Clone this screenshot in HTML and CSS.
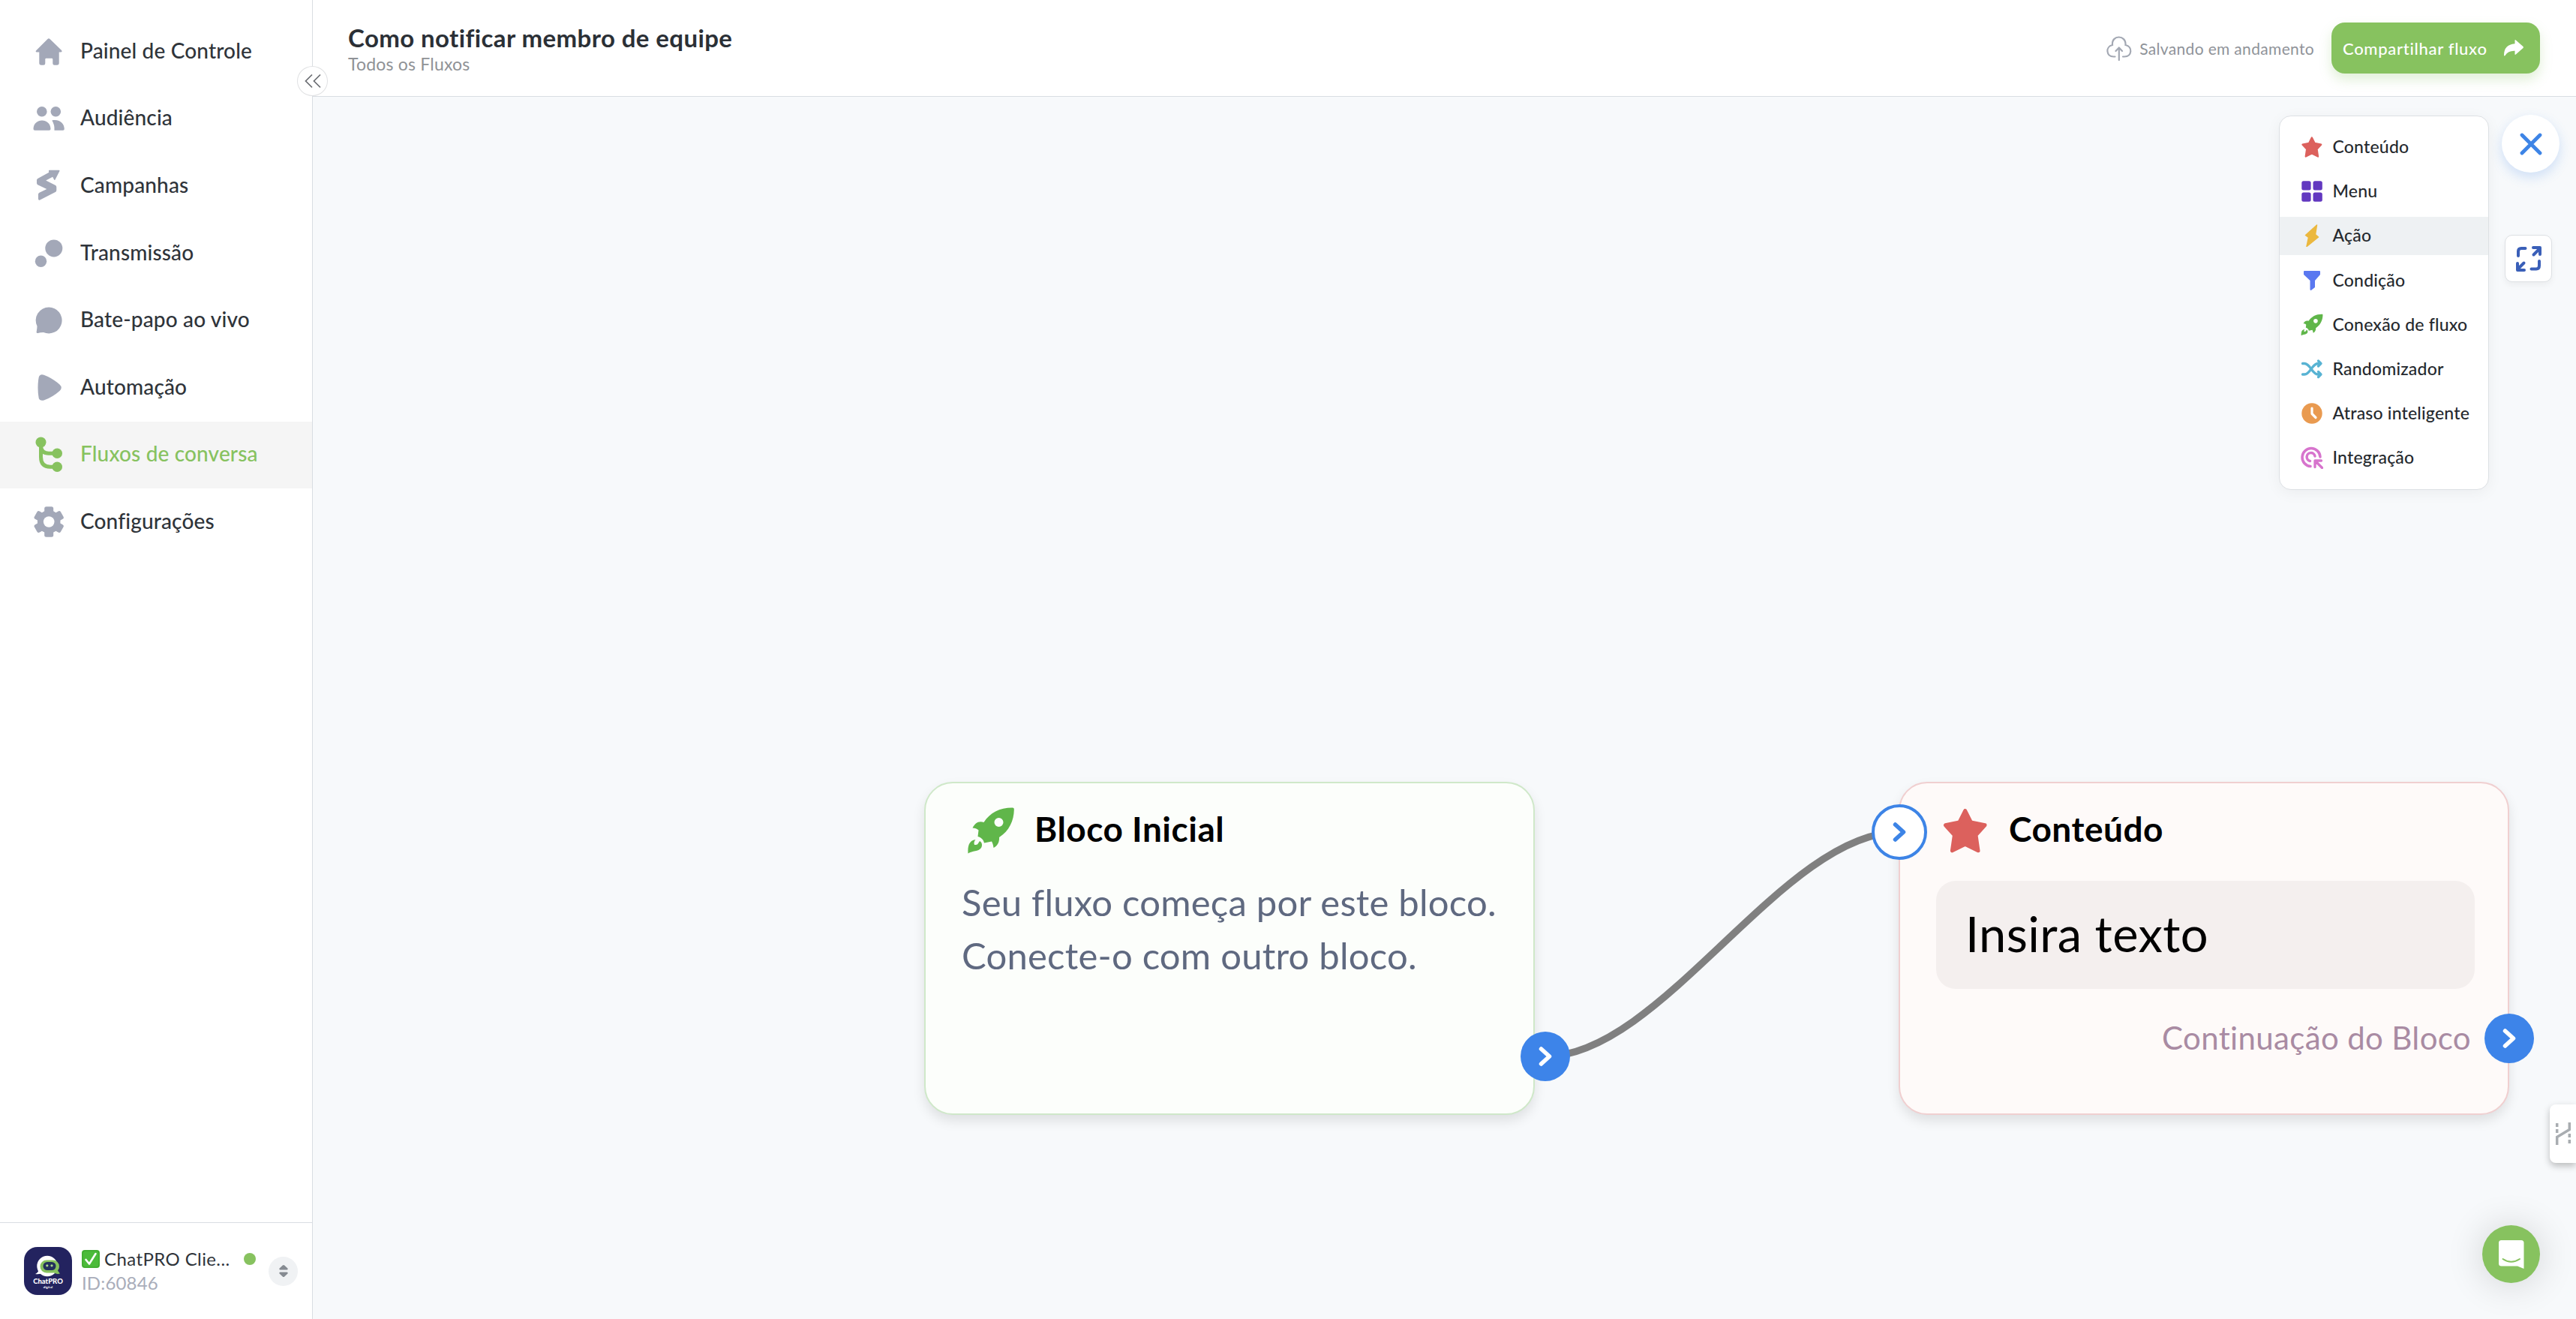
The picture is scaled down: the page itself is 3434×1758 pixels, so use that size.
FILE: index.html
```
<!DOCTYPE html>
<html lang="pt-BR">
<head>
  <meta charset="UTF-8" />
  <meta name="viewport" content="width=device-width, initial-scale=1" />
  <title>Como notificar membro de equipe</title>
  <link rel="stylesheet" href="styles.css">
</head>
<body>
  <!-- Shared icons -->
  <svg class="defs" aria-hidden="true">
    <symbol id="i-star" viewBox="0 0 64 64">
      <path d="M31.7 5.5 L39.5 21 L58 24.8 L46 38 L49 58.8 L31.7 50.2 L14.4 58.8 L17.4 38 L5.4 24.8 L23.9 21 Z" fill="#dc615d" stroke="#dc615d" stroke-width="5" stroke-linejoin="round"/>
    </symbol>
    <symbol id="i-rocket" viewBox="-1.5 -1.5 64 64">
      <path fill="#60b64a" fill-rule="evenodd" d="M59 0 C61 0 61.5 1 61.3 3 C61 17 55 31 41.5 39.5 C42 46 39 51 34 53.5 C33.5 50 33 47.500 31.500 45 L21.500 47 C20.500 42.500 18 40 13 38.500 L14 30 C12 28 9 27 6 27 C9 21 14 17 21 19.500 C29 7 42 0 59 0 Z M41 13.500 A6 6 0 1 0 41 25.500 A6 6 0 1 0 41 13.500 Z"/>
      <path fill="#60b64a" d="M0 61 C-.5 51 1 44 10 42.500 C8 45 7.500 47 8.500 49.500 C11 49.500 12.500 49.500 13.500 47.500 L15.500 44.500 C18.500 46 19.500 50 17.500 53.500 C13.500 59 6 57 0 61 Z"/>
    </symbol>
    <symbol id="i-next" viewBox="0 0 32 32">
      <path d="M10.500 6 L21.500 16 L10.500 26" fill="none" stroke="currentColor" stroke-width="5.500" stroke-linecap="round" stroke-linejoin="round"/>
    </symbol>
  </svg>

  <div class="app">
    <aside class="sidebar">
      <nav class="nav">
        <a class="nav-item">
          <svg class="nav-icon" viewBox="0 0 44 48"><path d="M20.500 7 Q22 5.600 23.500 7 L39 22 Q40.500 24.300 38 24.500 L35.700 24.500 V39 Q35.700 41.700 33 41.700 H29.500 Q27.300 41.700 27.300 39.500 V34 Q27.300 32.700 26 32.700 H18.500 Q17.300 32.700 17.300 34 V39.500 Q17.300 41.700 15 41.700 H12 Q9.300 41.700 9.300 39 V24.500 L6 24.500 Q3.500 24.300 5.500 22 Z"/></svg>
          <span>Painel de Controle</span>
        </a>
        <a class="nav-item">
          <svg class="nav-icon" viewBox="0 0 44 48"><circle cx="12.800" cy="14.700" r="6.800"/><circle cx="31.300" cy="14.700" r="6.800"/><path d="M1.500 38 C1.500 22.500 24.500 22.500 24.500 38 Q24.500 39.800 22.500 39.800 H3.500 Q1.500 39.800 1.500 38 Z M26.300 26.400 C37 24.500 42.800 31 42.800 38 Q42.800 39.800 41 39.800 H29.500 Q30 32 26.300 26.400 Z"/></svg>
          <span>Audiência</span>
        </a>
        <a class="nav-item">
          <svg class="nav-icon" viewBox="0 0 44 48"><path d="M23 2.700 H35.500 Q37 2.700 36.300 4.200 L30.500 15.500 Q29.600 16.800 29 15.300 L27.200 11.800 L18.200 16.600 L31 23 Q32.300 23.700 32.300 25.500 V29.500 Q32.300 31.200 30.800 32 L9.800 42.700 Q8 43.200 8 41 V35 Q8 33.600 9.500 32.800 L19.300 28 L7.200 22.300 Q6 21.600 6 20 V16 Q6 14.700 7.300 13.900 L22.300 5.700 Q21.200 2.900 23 2.700 Z"/></svg>
          <span>Campanhas</span>
        </a>
        <a class="nav-item">
          <svg class="nav-icon" viewBox="0 0 44 48"><circle cx="28.800" cy="16.900" r="11.500"/><circle cx="11.500" cy="34.200" r="7.700"/></svg>
          <span>Transmissão</span>
        </a>
        <a class="nav-item">
          <svg class="nav-icon" viewBox="0 0 44 48"><path d="M22.200 6.500 A17.500 17.500 0 1 1 15 40 Q10.500 40 7.500 40.900 Q5.200 41.200 5.700 39 Q6.500 34.500 6.500 31.800 A17.500 17.500 0 0 1 22.200 6.500 Z"/></svg>
          <span>Bate-papo ao vivo</span>
        </a>
        <a class="nav-item">
          <svg class="nav-icon" viewBox="0 0 44 48"><path d="M7.500 24 Q7.500 16 8.700 10 Q10 5 15.500 6.700 Q27 11 36.500 19.500 Q41 23.800 36.500 28 Q27 36.500 15.500 40.500 Q10 41.800 8.700 37.500 Q7.500 32 7.500 24 Z"/></svg>
          <span>Automação</span>
        </a>
        <a class="nav-item active">
          <svg class="nav-icon" viewBox="0 0 44 48"><circle cx="11.500" cy="7.500" r="7"/><circle cx="33.200" cy="22.300" r="6.800"/><circle cx="33.200" cy="40.200" r="6.800"/><path class="line" d="M11.500 8 V27 Q11.500 40.200 24 40.200 H33 M11.500 13 Q12.500 22.300 22 22.300 H33"/></svg>
          <span>Fluxos de conversa</span>
        </a>
        <a class="nav-item">
          <svg class="nav-icon" viewBox="0 0 44 48">
            <circle cx="22.200" cy="23.500" r="15.300"/>
            <rect x="16.200" y="3.300" width="12" height="40.400" rx="2.500"/>
            <rect x="16.200" y="3.300" width="12" height="40.400" rx="2.500" transform="rotate(60 22.200 23.500)"/>
            <rect x="16.200" y="3.300" width="12" height="40.400" rx="2.500" transform="rotate(120 22.200 23.500)"/>
            <circle class="hole" cx="22.200" cy="23.500" r="7.300"/>
          </svg>
          <span>Configurações</span>
        </a>
      </nav>

      <div class="account">
        <svg class="avatar" viewBox="0 0 64 64">
          <rect width="64" height="64" rx="18" fill="#23235f"/>
          <circle cx="31" cy="25.500" r="13.700" fill="#fff"/>
          <path d="M20 30 Q19 34 15 36 Q21 37 26 34 Z" fill="#fff"/>
          <rect x="21.500" y="17.500" width="25.500" height="17" rx="8.500" fill="#87c25f"/>
          <path d="M44 28 Q45 33 48 35.500 Q42 37 38 33 Z" fill="#87c25f"/>
          <rect x="25.500" y="20" width="17" height="11" rx="5.500" fill="#23305c"/>
          <circle cx="30.800" cy="24.800" r="1.600" fill="#a9d98a"/>
          <circle cx="37" cy="24.800" r="1.600" fill="#a9d98a"/>
          <text x="32" y="49" class="logo-name">ChatPRO</text>
          <text x="32" y="54.500" class="logo-sub">digital</text>
        </svg>
        <div class="account-info">
          <div class="account-name">
            <svg class="check" viewBox="0 0 24 24"><rect width="24" height="24" rx="4" fill="#4cbb3a"/><rect x="1" y="1" width="22" height="22" rx="3.500" fill="none" stroke="#3da32d" stroke-width="1"/><path d="M5.500 13 L10 18.500 L18.500 5" fill="none" stroke="#fff" stroke-width="2.600" stroke-linecap="round" stroke-linejoin="round"/></svg>
            <span>ChatPRO Clie...</span>
          </div>
          <div class="account-id">ID:60846</div>
        </div>
        <span class="status"></span>
        <button class="switch">
          <svg viewBox="0 0 14 18"><path d="M5.800 1.500 Q7 .3 8.200 1.500 L12.500 5.500 Q13.300 7.300 11.500 7.500 H2.500 Q.7 7.300 1.500 5.500 Z M5.800 16.500 Q7 17.700 8.200 16.500 L12.500 12.500 Q13.300 10.700 11.500 10.500 H2.500 Q.7 10.700 1.500 12.500 Z" fill="#868b92"/></svg>
        </button>
      </div>

      <button class="collapse">
        <svg viewBox="0 0 24 20"><path d="M11 1.500 L2.500 10 L11 18.500 M22 1.500 L13.500 10 L22 18.500" fill="none" stroke="#6a6d72" stroke-width="1.700"/></svg>
      </button>
    </aside>

    <div class="main">
      <header class="header">
        <div class="heading">
          <h1>Como notificar membro de equipe</h1>
          <p>Todos os Fluxos</p>
        </div>
        <div class="saving">
          <svg viewBox="0 0 36 34"><path d="M12.500 28.500 H10.500 C.5 28.500 -.5 15 9 13 C7.500 -1 27.500 -1 26.500 13 C36 15 35.500 28.500 25 28.500 H23" fill="none" stroke="#a3a8b3" stroke-width="2.200" stroke-linecap="round"/><path d="M17.800 33 V17 M13.500 21 L17.800 16.500 L22 21" fill="none" stroke="#a3a8b3" stroke-width="2.200" stroke-linecap="round" stroke-linejoin="round"/></svg>
          <span>Salvando em andamento</span>
        </div>
        <button class="share">
          <span>Compartilhar fluxo</span>
          <svg viewBox="0 0 30 26"><path d="M16.500 3 Q16.500 1.500 17.800 2.500 L27.500 11 Q28.500 12 27.500 13 L17.800 21.500 Q16.500 22.500 16.500 21 V16.800 Q7.500 16.500 3.500 23 Q2.300 24.300 2 22.500 Q1.800 8.500 16.500 7.200 Z" fill="#fff"/></svg>
        </button>
      </header>

      <div class="canvas">
        <svg class="links"><path d="M1643 1279 C1798 1279 1960 980 2115 980"/></svg>

        <section class="block block-start">
          <div class="block-head">
            <svg class="block-icon"><use href="#i-rocket"/></svg>
            <h2>Bloco Inicial</h2>
          </div>
          <p class="block-text">Seu fluxo começa por este bloco. Conecte-o com outro bloco.</p>
          <span class="port port-start"><svg><use href="#i-next"/></svg></span>
        </section>

        <section class="block block-content">
          <div class="block-head">
            <svg class="block-icon"><use href="#i-star"/></svg>
            <h2>Conteúdo</h2>
          </div>
          <div class="message">Insira texto</div>
          <p class="block-next">Continuação do Bloco</p>
          <span class="port port-in"><svg><use href="#i-next"/></svg></span>
          <span class="port port-out"><svg><use href="#i-next"/></svg></span>
        </section>

        <ul class="menu">
          <li><svg><use href="#i-star"/></svg><span>Conteúdo</span></li>
          <li><svg viewBox="0 0 30 30" fill="#6238c0"><rect x="1.300" y="1.300" width="12.300" height="12.300" rx="2.500"/><rect x="16.500" y="1.300" width="12.300" height="12.300" rx="2.500"/><rect x="1.300" y="16.500" width="12.300" height="12.300" rx="2.500"/><rect x="16.500" y="16.500" width="12.300" height="12.300" rx="2.500"/></svg><span>Menu</span></li>
          <li class="selected"><svg viewBox="0 0 30 30"><path d="M21.500 1 L6.500 14.500 L10.500 17.500 L8 29.500 L23.500 17 L19.500 13.500 Z" fill="#ebb83f" stroke="#ebb83f" stroke-width="1.500" stroke-linejoin="round"/></svg><span>Ação</span></li>
          <li><svg viewBox="0 0 30 30"><path d="M5 3 H25 V6.500 L18 14.500 V23.500 L13.500 27 V14.500 L5 6.500 Z" fill="#5a78f0" stroke="#5a78f0" stroke-width="2" stroke-linejoin="round"/></svg><span>Condição</span></li>
          <li><svg><use href="#i-rocket"/></svg><span>Conexão de fluxo</span></li>
          <li><svg viewBox="0 0 30 30" fill="none" stroke="#58b3d3" stroke-width="3.300" stroke-linecap="round" stroke-linejoin="round"><path d="M2.500 7.500 H5 C13 7.500 15 22 23 22 H27 M2.500 22 H5 C13 22 15 7.500 23 7.500 H27 M23.500 4 L27 7.500 L23.500 11 M23.500 18.500 L27 22 L23.500 25.500"/></svg><span>Randomizador</span></li>
          <li><svg viewBox="0 0 30 30"><circle cx="15" cy="15" r="13.700" fill="#e99a50"/><path d="M15 8 V15.500 L20 20.500" fill="none" stroke="#fff" stroke-width="3.200" stroke-linecap="round" stroke-linejoin="round"/></svg><span>Atraso inteligente</span></li>
          <li><svg viewBox="0 0 30 30" fill="none" stroke="#d774cd" stroke-width="3.500" stroke-linecap="round" stroke-linejoin="round"><path d="M26 14 A12 12 0 1 0 13 26.500 M19 13 A5.500 5.500 0 1 0 12.500 19.500"/><path d="M19.500 19.500 L28.500 28.500 M19 27.500 V19 H27.500" stroke-width="3.300"/></svg><span>Integração</span></li>
        </ul>

        <button class="close">
          <svg viewBox="0 0 30 30"><path d="M3 3 L27 27 M27 3 L3 27" stroke="#3d84e6" stroke-width="4.800" stroke-linecap="round"/></svg>
        </button>
        <button class="expand">
          <svg viewBox="0 0 36 36" fill="none" stroke="#3a5fb8" stroke-width="4" stroke-linecap="round" stroke-linejoin="round"><path d="M4 14 V8 Q4 4 8 4 H13.500 M24.500 12.500 L32 5 M24 3 H33 V12 M32 21 V27 Q32 31.500 28 31.500 H21.500 M11.500 23.500 L4 31 M3 24 V33 H12"/></svg>
        </button>
        <div class="side-tab">
          <svg viewBox="0 0 22 32" fill="none" stroke="#a9adb1" stroke-width="3.500"><path d="M2.700 31 V20.500 L19.300 10.500 V1"/><path d="M2.700 2 V16 M19.300 16 V31" stroke-dasharray="5 3"/></svg>
        </div>
        <button class="chat">
          <svg viewBox="0 0 36 40"><path d="M4.500 1 H31 Q34.500 1 34.500 4.500 V39 L26 35.500 H4.500 Q1 35.500 1 32 V4.500 Q1 1 4.500 1 Z" fill="#fff"/><path d="M6.500 26 Q17.500 33.500 29 26" fill="none" stroke="#87c25f" stroke-width="2" stroke-linecap="round"/></svg>
        </button>
      </div>
    </div>
  </div>
</body>
</html>
```
FILE: styles.css
```
* {
  box-sizing: border-box;
}
body {
  margin: 0;
  font-family: Lato, "Open Sans", sans-serif;
  color: #2f343a;
  background: #fff;
}
h1, h2, p, ul {
  margin: 0;
  padding: 0;
}
button {
  border: none;
  padding: 0;
  font-family: inherit;
  cursor: pointer;
}
svg {
  display: block;
  flex-shrink: 0;
}
.defs {
  position: absolute;
  width: 0;
  height: 0;
}
.app {
  display: flex;
  height: 100vh;
  overflow: hidden;
}

/* Sidebar */
.sidebar {
  position: relative;
  z-index: 2;
  width: 417px;
  flex-shrink: 0;
  display: flex;
  flex-direction: column;
  justify-content: space-between;
  background: #fff;
  border-right: 1px solid #d9dde2;
}
.nav {
  padding-top: 24.5px;
}
.nav-item {
  display: flex;
  align-items: center;
  gap: 20px;
  height: 88.6px;
  margin-bottom: 1px;
  padding-left: 43px;
  font-size: 28px;
  font-weight: 500;
  letter-spacing: 0.15px;
}
.nav-item span {
  padding-bottom: 4px;
}
.nav-icon {
  width: 44px;
  height: 48px;
  fill: #a3a8b8;
}
.nav-icon .hole {
  fill: #fff;
}
.nav-icon .line {
  fill: none;
  stroke: #87c25f;
  stroke-width: 5;
}
.nav-item.active {
  background: #f5f5f5;
  color: #87c25f;
}
.nav-item.active .nav-icon {
  fill: #87c25f;
}
.account {
  display: flex;
  align-items: center;
  height: 129px;
  padding: 0 19px 0 32px;
  border-top: 1px solid #d9dde2;
}
.avatar {
  width: 64px;
  height: 64px;
}
.logo-name {
  font-size: 9.5px;
  font-weight: 900;
  text-anchor: middle;
  fill: #fff;
}
.logo-sub {
  font-size: 4.5px;
  font-weight: 700;
  text-anchor: middle;
  fill: #fff;
}
.account-info {
  width: 216px;
  padding-left: 13px;
  font-size: 24px;
  line-height: 32px;
}
.account-name {
  display: flex;
  align-items: center;
  gap: 6px;
  letter-spacing: 0.4px;
  white-space: nowrap;
}
.check {
  width: 24px;
  height: 24px;
}
.account-id {
  color: #a9adba;
  letter-spacing: 0.15px;
}
.status {
  width: 16px;
  height: 16px;
  margin: 0 17px 32px 13px;
  border-radius: 50%;
  background: #87c25f;
}
.switch {
  display: flex;
  align-items: center;
  justify-content: center;
  width: 39px;
  height: 39px;
  border-radius: 50%;
  background: #f0f2f4;
}
.switch svg {
  width: 14px;
  height: 18px;
}
.collapse {
  position: absolute;
  right: -21px;
  top: 88px;
  display: flex;
  align-items: center;
  justify-content: center;
  width: 41px;
  height: 40px;
  border: 1px solid #e0e1e3;
  border-radius: 50%;
  background: #fff;
}
.collapse svg {
  width: 24px;
  height: 20px;
}

/* Header */
.main {
  flex: 1;
  display: flex;
  flex-direction: column;
}
.header {
  display: flex;
  align-items: center;
  height: 129px;
  padding: 0 48px 0 47px;
  background: #fff;
  border-bottom: 1px solid #d9dde2;
}
.heading {
  flex: 1;
}
.heading h1 {
  font-size: 33px;
  line-height: 38px;
  letter-spacing: 0.4px;
  color: #2b3036;
}
.heading p {
  margin-top: 3px;
  font-size: 23px;
  line-height: 26px;
  letter-spacing: 0.2px;
  color: #8f9296;
}
.saving {
  display: flex;
  align-items: center;
  gap: 9px;
  margin-right: 23px;
  font-size: 21px;
  letter-spacing: 0.33px;
  color: #8f9399;
}
.saving svg {
  width: 36px;
  height: 34px;
}
.share {
  display: flex;
  align-items: center;
  justify-content: space-between;
  width: 278px;
  height: 68px;
  padding: 0 20px 0 15px;
  border-radius: 18px;
  background: #87c25f;
  box-shadow: 0 8px 16px rgba(135, 194, 95, 0.25);
  color: #fff;
  font-size: 22px;
  font-weight: 500;
  letter-spacing: 0.7px;
}
.share svg {
  width: 30px;
  height: 26px;
}

/* Flow canvas */
.canvas {
  position: relative;
  flex: 1;
  background: #f7f9fb;
}
.links {
  position: absolute;
  inset: 0;
  width: 100%;
  height: 100%;
}
.links path {
  fill: none;
  stroke: #808080;
  stroke-width: 9.5;
}
.block {
  position: absolute;
  top: 913px;
  width: 814px;
  height: 444px;
  padding: 31px 44px 0 48px;
  border-radius: 38px;
  border: 2px solid;
  box-shadow: 0 8px 16px rgba(0, 0, 0, 0.1);
}
.block-start {
  left: 815px;
  background: #fcfefb;
  border-color: #cfe8c9;
}
.block-content {
  left: 2114px;
  background: #fefaf9;
  border-color: #f0cfd0;
}
.block-head {
  display: flex;
  align-items: center;
  gap: 26px;
  height: 64px;
  padding-left: 7px;
}
.block-icon {
  width: 64px;
  height: 64px;
}
.block-head h2 {
  padding-bottom: 5px;
  font-size: 46px;
  line-height: 56px;
  letter-spacing: 0.5px;
  color: #000;
}
.block-text {
  margin-top: 28px;
  font-size: 49px;
  line-height: 70.7px;
  letter-spacing: 0.22px;
  color: #5f6980;
}
.message {
  display: flex;
  align-items: center;
  height: 144px;
  margin-top: 35px;
  padding: 0 0 5px 39px;
  border-radius: 26px;
  background: #f4efee;
  font-size: 65px;
  letter-spacing: 0.4px;
  color: #000;
}
.block-next {
  margin-top: 32px;
  padding-right: 5px;
  font-size: 42px;
  line-height: 66px;
  letter-spacing: 0.35px;
  text-align: right;
  color: #a98ba3;
}
.port {
  position: absolute;
  display: flex;
  align-items: center;
  justify-content: center;
  width: 66px;
  height: 66px;
  border-radius: 50%;
  background: #3d84e9;
  color: #fff;
}
.port svg {
  width: 32px;
  height: 32px;
}
.port-start {
  right: -49px;
  top: 331px;
}
.port-in {
  left: -38px;
  top: 28px;
  width: 74px;
  height: 74px;
  border: 4px solid #3d84e6;
  background: #fff;
  color: #3d84e6;
}
.port-out {
  right: -35px;
  top: 307px;
}

/* Block picker */
.menu {
  position: absolute;
  right: 116px;
  top: 25px;
  display: flex;
  flex-direction: column;
  gap: 8.2px;
  width: 280px;
  height: 499px;
  padding-top: 15.5px;
  border: 1px solid #dde0e4;
  border-radius: 16px;
  background: #fff;
  box-shadow: 0 4px 20px rgba(0, 0, 0, 0.05);
  list-style: none;
}
.menu li {
  display: flex;
  align-items: center;
  gap: 12.5px;
  height: 51px;
  padding-left: 28px;
  font-size: 23px;
  font-weight: 500;
  letter-spacing: 0.2px;
  white-space: nowrap;
  color: #25292e;
}
.menu li span {
  padding-bottom: 2px;
}
.menu li.selected {
  background: #eef1f3;
}
.menu svg {
  width: 30px;
  height: 30px;
}
.close, .expand, .chat, .side-tab {
  position: absolute;
  display: flex;
  align-items: center;
  justify-content: center;
}
.close {
  right: 22px;
  top: 24px;
  width: 77px;
  height: 77px;
  border-radius: 50%;
  background: #fff;
  box-shadow: 0 6px 16px rgba(61, 132, 230, 0.22);
}
.close svg {
  width: 30px;
  height: 30px;
}
.expand {
  right: 32px;
  top: 184px;
  width: 63px;
  height: 63px;
  border: 1px solid #dde0e4;
  border-radius: 10px;
  background: #fff;
  box-shadow: 0 4px 8px rgba(0, 0, 0, 0.05);
}
.expand svg {
  width: 36px;
  height: 36px;
}
.side-tab {
  right: 0;
  top: 1343px;
  width: 35px;
  height: 78px;
  border-radius: 8px 0 0 8px;
  background: #fff;
  box-shadow: 0 4px 10px rgba(0, 0, 0, 0.25);
}
.side-tab svg {
  width: 22px;
  height: 32px;
}
.chat {
  right: 48px;
  top: 1504px;
  width: 77px;
  height: 77px;
  border-radius: 50%;
  background: #87c25f;
  box-shadow: 0 2px 50px rgba(0, 0, 0, 0.16);
}
.chat svg {
  width: 36px;
  height: 40px;
}
```
